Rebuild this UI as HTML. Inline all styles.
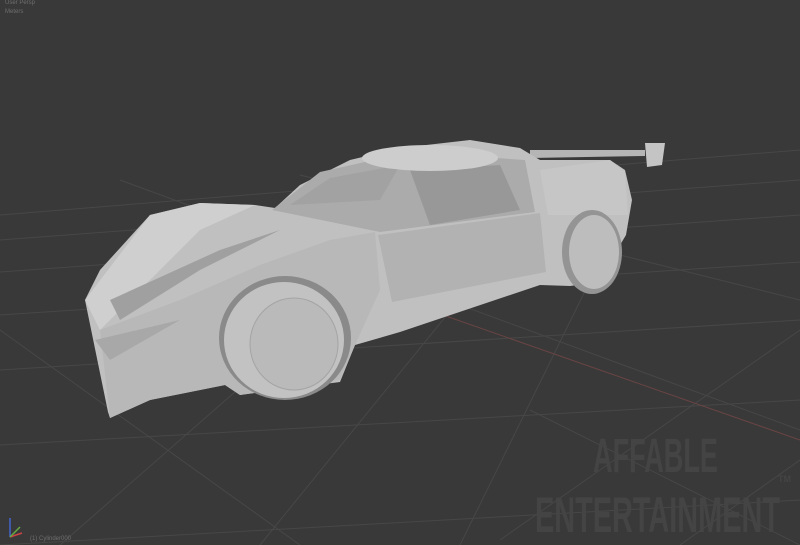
<!DOCTYPE html>
<html><head><style>
html,body{margin:0;padding:0;background:#393939;width:800px;height:545px;overflow:hidden;font-family:"Liberation Sans",sans-serif}
.t{position:absolute;color:#6e6e6e;font-size:6px}
</style></head><body>
<svg width="800" height="545" style="position:absolute;left:0;top:0">
<rect width="800" height="545" fill="#393939"/>
<g stroke="#474747" stroke-width="1" fill="none">
<line x1="0" y1="215" x2="800" y2="150"/>
<line x1="0" y1="240" x2="800" y2="180"/>
<line x1="0" y1="272" x2="800" y2="215"/>
<line x1="0" y1="315" x2="800" y2="262"/>
<line x1="0" y1="370" x2="800" y2="320"/>
<line x1="0" y1="445" x2="800" y2="400"/>
<line x1="0" y1="545" x2="800" y2="500"/>
<line x1="60" y1="545" x2="420" y2="230"/>
<line x1="260" y1="545" x2="520" y2="225"/>
<line x1="460" y1="545" x2="620" y2="220"/>
<line x1="120" y1="180" x2="800" y2="430"/>
<line x1="300" y1="175" x2="800" y2="300"/>
<line x1="500" y1="540" x2="800" y2="330"/>
<line x1="680" y1="545" x2="800" y2="460"/>
<line x1="0" y1="330" x2="300" y2="545"/>
<line x1="530" y1="410" x2="800" y2="545"/>
</g>
<line x1="400" y1="300" x2="800" y2="440" stroke="#6a4444" stroke-width="1"/>
<!-- wing -->
<polygon points="530,150 645,150 645,156 530,158" fill="#b5b5b5"/>
<polygon points="645,143 665,143 662,165 647,167" fill="#c4c4c4"/>
<!-- body -->
<polygon points="108,412 85,300 100,270 150,215 200,203 255,205 275,208 300,185 350,160 400,148 470,140 520,148 540,160 610,160 625,170 632,200 626,235 610,262 600,282 570,286 540,285 400,332 355,345 340,382 240,395 225,385 150,400 110,418" fill="#c0c0c0"/>
<polygon points="85,300 150,215 200,203 255,205 200,230 130,300 100,330" fill="#cfcfcf"/>
<polygon points="100,330 180,300 260,265 330,240 375,232 380,290 355,345 340,380 240,395 225,385 150,400 110,418" fill="#b8b8b8"/>
<polygon points="110,300 220,250 280,230 200,270 120,320" fill="#a0a0a0"/>
<polygon points="95,340 180,320 110,360" fill="#a8a8a8"/>
<!-- canopy -->
<polygon points="272,210 320,172 410,152 525,160 535,212 380,232" fill="#ababab"/>
<polygon points="290,205 330,178 400,165 380,200" fill="#a2a2a2"/>
<polygon points="410,170 500,165 520,210 430,225" fill="#989898"/>
<ellipse cx="430" cy="158" rx="68" ry="13" fill="#cdcdcd"/>
<!-- side panel -->
<polygon points="378,235 540,213 546,272 392,302" fill="#b2b2b2"/>
<polygon points="540,170 610,160 625,172 628,215 548,215" fill="#c6c6c6"/>
<!-- wheels -->
<ellipse cx="592" cy="252" rx="30" ry="42" fill="#949494"/>
<ellipse cx="594" cy="252" rx="25" ry="37" fill="#bdbdbd"/>
<ellipse cx="285" cy="338" rx="66" ry="62" fill="#8a8a8a"/>
<ellipse cx="284" cy="340" rx="60" ry="58" fill="#c2c2c2"/>
<ellipse cx="294" cy="344" rx="44" ry="46" fill="#bababa" stroke="#a4a4a4"/>
<!-- axis gizmo -->
<line x1="10" y1="537" x2="10" y2="518" stroke="#4466cc" stroke-width="1.5"/>
<line x1="10" y1="537" x2="22" y2="533" stroke="#cc4444" stroke-width="1.5"/>
<line x1="10" y1="537" x2="20" y2="527" stroke="#66aa44" stroke-width="1.5"/>
<!-- watermark -->
<g fill="#444" font-family="Liberation Sans" font-weight="bold">
<text x="593" y="472" font-size="48" textLength="125" lengthAdjust="spacingAndGlyphs">AFFABLE</text>
<text x="535" y="532" font-size="50" textLength="245" lengthAdjust="spacingAndGlyphs">ENTERTAINMENT</text>
<text x="778" y="482" font-size="9">TM</text>
</g>
</svg>
<div class="t" style="left:5px;top:0px">User Persp</div>
<div class="t" style="left:5px;top:9px">Meters</div>
<div class="t" style="left:30px;top:536px">(1) Cylinder000</div>
</body></html>
